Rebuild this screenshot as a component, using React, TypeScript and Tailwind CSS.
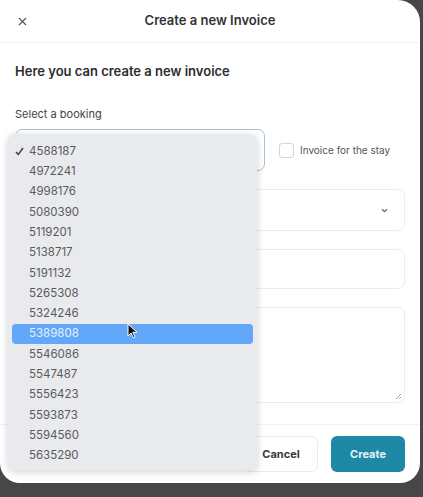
import { X } from 'lucide-react';

const bookings = [
  '4588187', '4972241', '4998176', '5080390', '5119201', '5138717', '5191132', '5265308',
  '5324246', '5389808', '5546086', '5547487', '5556423', '5593873', '5594560', '5635290',
];

export default function App() {
  return (
    <div
      className="relative w-[423px] h-[497px] bg-[#474747] overflow-hidden"
      style={{ fontFamily: 'Inter, "Noto Sans", sans-serif' }}
    >
      <div className="w-[420px] h-[483px] bg-white rounded-tr-[22px] rounded-b-[20px] flex flex-col">
        {/* header */}
        <div className="relative h-[43px] flex items-center justify-center border-b border-[#f1f1f1]">
          <X className="absolute left-[16px] w-[13px] h-[13px] text-[#555]" strokeWidth={2} />
          <span className="text-[13px] font-semibold text-[#333]">Create a new Invoice</span>
        </div>

        {/* body */}
        <div className="flex-1 px-[15px] pt-[19px]">
          <h2 className="text-[13px] leading-[18px] font-semibold text-[#2d2d2d]">
            Here you can create a new invoice
          </h2>
          <div className="mt-[26px] text-[11px] leading-[16px] text-[#444]">Select a booking</div>

          <div className="mt-[7px] flex items-center gap-[14px]">
            <div className="w-[250px] h-[42px] rounded-[7px] border border-[#a9c3d8]" />
            <label className="flex items-center gap-[6px]">
              <span className="w-[15px] h-[15px] rounded-[3px] border border-[#d6d6d6] bg-white" />
              <span className="text-[10px] text-[#555]">Invoice for the stay</span>
            </label>
          </div>

          <div className="mt-[18px] h-[42px] rounded-[7px] border border-[#ececec] flex items-center justify-end pr-[16px]">
            <svg width="7" height="5" viewBox="0 0 7 5" className="text-[#666]">
              <path d="M1 1.2 L3.5 3.6 L6 1.2" fill="none" stroke="currentColor" strokeWidth="1.2" />
            </svg>
          </div>

          <div className="mt-[18px] h-[40px] rounded-[7px] border border-[#ececec]" />

          <div className="relative mt-[18px] h-[96px] rounded-[7px] border border-[#ececec]">
            <svg width="7" height="7" viewBox="0 0 7 7" className="absolute right-[2px] bottom-[2px] text-[#999]">
              <path d="M6 1 L1 6 M6 4 L4 6" stroke="currentColor" strokeWidth="0.9" />
            </svg>
          </div>
        </div>

        {/* footer */}
        <div className="h-[59px] border-t border-[#f1f1f1] flex items-start justify-end gap-[13px] px-[15px] pt-[11px]">
          <button className="w-[74px] h-[36px] rounded-[6px] border border-[#ececec] text-[11px] font-bold text-[#3a3a3a]">
            Cancel
          </button>
          <button className="w-[74px] h-[36px] rounded-[6px] bg-[#1e89a6] text-[11px] font-bold text-[#e8f4f7]">
            Create
          </button>
        </div>
      </div>

      {/* open dropdown */}
      <div className="absolute left-[8px] top-[134px] w-[249px] h-[336px] rounded-[7px] bg-[#e9eaed] shadow-[0_2px_8px_rgba(0,0,0,0.18)] pt-[7px] px-[4px]">
        {bookings.map((b, i) => (
          <div
            key={b}
            className={
              'relative h-[20.33px] flex items-center pl-[17px] rounded-[4px] text-[11.5px] ' +
              (i === 9 ? 'bg-[#63a7f8] text-[#e6f0ff]' : 'text-[#5a5a5a]')
            }
          >
            {i === 0 && (
              <svg width="9" height="9" viewBox="0 0 9 9" className="absolute left-[3px] text-[#333]">
                <path d="M1 5 L3.3 7.5 L8 1" fill="none" stroke="currentColor" strokeWidth="1.3" />
              </svg>
            )}
            {b}
          </div>
        ))}
      </div>

      {/* mouse pointer */}
      <svg width="11" height="16" viewBox="0 0 11 16" className="absolute left-[127px] top-[323px]">
        <path d="M1 1 L1 13 L4 10 L6.2 14.6 L8 13.8 L5.8 9.3 L10 9.3 Z" fill="#111" stroke="#fff" strokeWidth="1" />
      </svg>
    </div>
  );
}
